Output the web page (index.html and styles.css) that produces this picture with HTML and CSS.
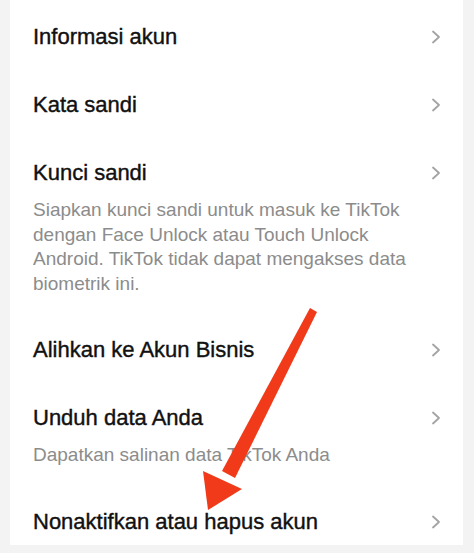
FILE: index.html
```html
<!DOCTYPE html>
<html lang="id">
<head>
<meta charset="utf-8">
<link rel="stylesheet" href="styles.css">
</head>
<body>
<div class="card">
  <div class="item">
    <div class="row"><span class="title">Informasi akun</span><svg class="chev" viewBox="0 0 10 14"><path d="M2 1.5 L8 7 L2 12.5"/></svg></div>
  </div>
  <div class="item">
    <div class="row"><span class="title">Kata sandi</span><svg class="chev" viewBox="0 0 10 14"><path d="M2 1.5 L8 7 L2 12.5"/></svg></div>
  </div>
  <div class="item">
    <div class="row"><span class="title">Kunci sandi</span><svg class="chev" viewBox="0 0 10 14"><path d="M2 1.5 L8 7 L2 12.5"/></svg></div>
    <p class="desc">Siapkan kunci sandi untuk masuk ke TikTok dengan Face Unlock atau Touch Unlock Android. TikTok tidak dapat mengakses data biometrik ini.</p>
  </div>
  <div class="item">
    <div class="row"><span class="title">Alihkan ke Akun Bisnis</span><svg class="chev" viewBox="0 0 10 14"><path d="M2 1.5 L8 7 L2 12.5"/></svg></div>
  </div>
  <div class="item">
    <div class="row"><span class="title">Unduh data Anda</span><svg class="chev" viewBox="0 0 10 14"><path d="M2 1.5 L8 7 L2 12.5"/></svg></div>
    <p class="desc">Dapatkan salinan data TikTok Anda</p>
  </div>
  <div class="item">
    <div class="row last"><span class="title">Nonaktifkan atau hapus akun</span><svg class="chev" viewBox="0 0 10 14"><path d="M2 1.5 L8 7 L2 12.5"/></svg></div>
  </div>
</div>
<svg class="arrow" viewBox="0 0 474 553" width="474" height="553">
  <polygon points="310,308 317,312 235,478 222,471"/>
  <polygon points="203,471 242,489 208,510"/>
</svg>
</body>
</html>
```
FILE: styles.css
```css
html, body {
  margin: 0;
  padding: 0;
}
body {
  background: #f3f3f3;
  width: 474px;
  height: 553px;
  overflow: hidden;
  position: relative;
  font-family: "Liberation Sans", Arial, sans-serif;
}
.card {
  background: #ffffff;
  margin: 0 11px 0 10px;
  padding: 3px 22px 0 23px;
}
.row {
  display: flex;
  align-items: center;
  justify-content: space-between;
  padding: 22px 0;
  height: 24px;
}
.row.last {
  padding-bottom: 11px;
}
.title {
  font-size: 22px;
  line-height: 24px;
  color: #111111;
  -webkit-text-stroke: 0.4px #111111;
}
.chev {
  width: 10px;
  height: 14px;
  fill: none;
  stroke: #a3a3a3;
  stroke-width: 1.8;
  stroke-linecap: round;
  stroke-linejoin: round;
}
.desc {
  margin: -9px 0 0 0;
  padding: 0 0 20px 0;
  font-size: 19px;
  line-height: 24.5px;
  color: #8c8c8c;
}
.arrow {
  position: absolute;
  left: 0;
  top: 0;
  fill: #f03a19;
}
```
